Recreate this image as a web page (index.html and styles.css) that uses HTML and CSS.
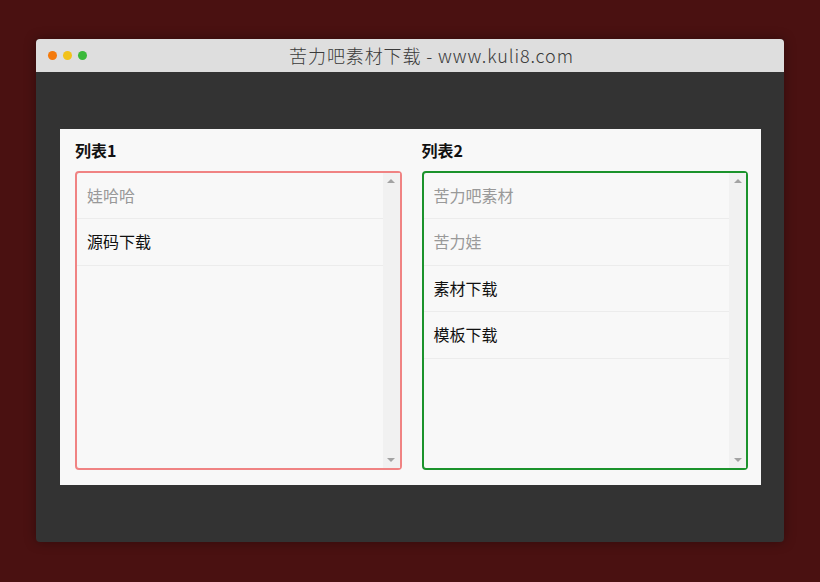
FILE: index.html
```html
<!DOCTYPE html>
<html lang="zh-CN">
<head>
<meta charset="utf-8">
<title>苦力吧素材下载</title>
<link rel="stylesheet" href="styles.css">
</head>
<body>
<div class="window">
  <div class="titlebar">
    <div class="dots">
      <span class="dot dot-orange"></span>
      <span class="dot dot-yellow"></span>
      <span class="dot dot-green"></span>
    </div>
    <div class="title">苦力吧素材下载 - www.kuli8.com</div>
  </div>
  <div class="content">
    <div class="panel">
      <div class="column">
        <h3 class="heading">列表1</h3>
        <div class="listbox listbox-red">
          <ul class="items">
            <li class="item item-muted">娃哈哈</li>
            <li class="item">源码下载</li>
          </ul>
          <div class="scrollbar">
            <span class="arrow arrow-up"></span>
            <span class="arrow arrow-down"></span>
          </div>
        </div>
      </div>
      <div class="column">
        <h3 class="heading">列表2</h3>
        <div class="listbox listbox-green">
          <ul class="items">
            <li class="item item-muted">苦力吧素材</li>
            <li class="item item-muted">苦力娃</li>
            <li class="item">素材下载</li>
            <li class="item">模板下载</li>
          </ul>
          <div class="scrollbar">
            <span class="arrow arrow-up"></span>
            <span class="arrow arrow-down"></span>
          </div>
        </div>
      </div>
    </div>
  </div>
</div>
</body>
</html>
```
FILE: styles.css
```css
html, body {
  margin: 0;
  padding: 0;
}
body {
  background: #4a1111;
  font-family: "Noto Sans CJK SC", "Noto Sans", sans-serif;
  width: 820px;
  height: 582px;
  overflow: hidden;
}
.window {
  margin: 39px 0 0 36px;
  width: 748px;
  height: 503px;
  border-radius: 4px;
  overflow: hidden;
  background: #333333;
  box-shadow: 0 0 12px rgba(0,0,0,0.35);
  display: flex;
  flex-direction: column;
}
.titlebar {
  height: 33px;
  background: #dedede;
  display: flex;
  align-items: center;
}
.dots {
  display: flex;
  gap: 6px;
  padding-left: 12px;
}
.dot {
  width: 9px;
  height: 9px;
  border-radius: 50%;
  display: block;
}
.dot-orange { background: #f47a0c; }
.dot-yellow { background: #f2c21a; }
.dot-green { background: #3ab93a; }
.title {
  flex: 1;
  text-align: center;
  padding-right: 8px;
  font-size: 18px;
  font-weight: 300;
  color: #3a3a3a;
  letter-spacing: 0.9px;
  line-height: 33px;
}
.content {
  flex: 1;
  padding: 57px 23px 0 24px;
}
.panel {
  height: 356px;
  box-sizing: border-box;
  background: #f8f8f8;
  padding: 10px 13px 15px 15px;
  display: grid;
  grid-template-columns: 1fr 1fr;
  column-gap: 20px;
}
.column {
  display: flex;
  flex-direction: column;
}
.heading {
  margin: 0 0 10px 0;
  font-size: 16px;
  font-weight: bold;
  line-height: 22px;
  color: #111;
}
.listbox {
  flex: 1;
  border: 2px solid;
  border-radius: 4px;
  display: flex;
  background: #f8f8f8;
}
.listbox-red { border-color: #f08383; }
.listbox-green { border-color: #1b932c; }
.items {
  list-style: none;
  margin: 0;
  padding: 0;
  flex: 1;
}
.item {
  height: 45.4px;
  line-height: 45.4px;
  border-bottom: 1px solid #ececec;
  padding-left: 10px;
  font-size: 16px;
  color: #111;
}
.item-muted {
  color: #999;
}
.scrollbar {
  width: 17px;
  background: #f1f1f1;
  display: flex;
  flex-direction: column;
  justify-content: space-between;
  align-items: center;
  padding: 6px 0 6px;
}
.arrow {
  width: 0;
  height: 0;
  border-left: 4px solid transparent;
  border-right: 4px solid transparent;
  display: block;
}
.arrow-up {
  border-bottom: 4px solid #a3a3a3;
}
.arrow-down {
  border-top: 4px solid #a3a3a3;
}
```
